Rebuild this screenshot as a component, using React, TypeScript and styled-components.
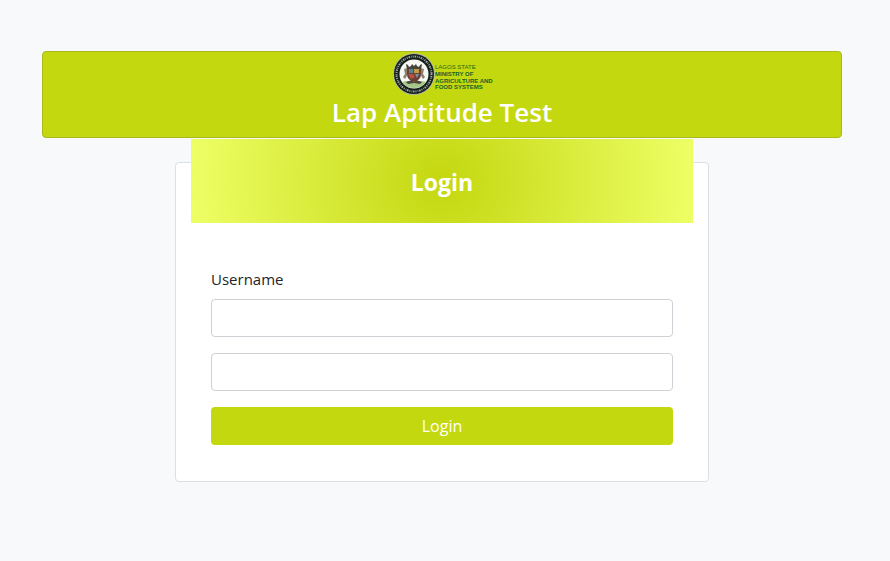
import React from "react";
import styled, { createGlobalStyle } from "styled-components";

const GlobalStyle = createGlobalStyle`
  *, *::before, *::after { box-sizing: border-box; }
  body {
    margin: 0;
    background: #f7f9fb;
    color: #212529;
    font-family: "Segoe UI", "Open Sans", "Noto Sans", sans-serif;
    font-size: 15px;
    line-height: 24px;
  }
`;

const Page = styled.main`
  display: flex;
  flex-direction: column;
  align-items: center;
  padding: 51px 48px 24px 42px;
`;

const Banner = styled.header`
  display: flex;
  flex-direction: column;
  align-items: center;
  width: 100%;
  padding-bottom: 8px;
  border: 1px solid #a9b91c;
  border-radius: 4px;
  background: #c4d80f;
`;

const Brand = styled.svg`
  display: block;
  width: 102px;
  height: 44px;
  overflow: visible;
`;

const Title = styled.h1`
  margin: 0;
  color: #fff;
  font-size: 26px;
  font-weight: 600;
  line-height: 33px;
`;

const Card = styled.section`
  width: 66.75%;
  margin-top: 24px;
  padding: 0 15px 36px;
  border: 1px solid #dcdfe3;
  border-radius: 4px;
  background: #fff;
`;

const CardHeading = styled.h2`
  margin: -24px 0 0;
  padding: 28px 20px 26px;
  background: radial-gradient(circle, #c4d70f, #eeff66);
  color: #fff;
  font-size: 23px;
  font-weight: 700;
  line-height: 30px;
  text-align: center;
`;

const Form = styled.form`
  display: flex;
  flex-direction: column;
  gap: 16px;
  padding: 44px 20px 0;
`;

const Field = styled.div`
  display: flex;
  flex-direction: column;
  gap: 8px;
`;

const TextInput = styled.input`
  width: 100%;
  height: 38px;
  padding: 6px 12px;
  border: 1px solid #cdd1d5;
  border-radius: 4px;
  background: #fff;
  color: inherit;
  font: inherit;
`;

const SubmitButton = styled.button`
  height: 38px;
  border: 0;
  border-radius: 4px;
  background: #c4d80f;
  color: #fff;
  font: inherit;
  font-size: 16px;
  cursor: pointer;
`;

function BrandMark() {
  return (
    <Brand viewBox="0 0 102 44" role="img" aria-label="Lagos State Ministry of Agriculture and Food Systems">
      <circle cx="23" cy="22" r="21" fill="#b5b9a6" />
      <circle cx="23" cy="22" r="20" fill="#15201b" />
      <circle cx="23" cy="22" r="17.5" fill="none" stroke="#a4aca4" strokeWidth="2" strokeDasharray="1 1 1.5 .8 .7 1.2" />
      <circle cx="23" cy="22" r="14.5" fill="#f7f8f3" />
      <path d="M15 12l2 1 1 2 2-1 1-2 2 2 2-2 1 2 2 1 1-2 2-1-1 6H16z" fill="#46433a" />
      <path d="M13 17l3-1 1 6-3 5-2-2 2-3zM33 17l-3-1-1 6 3 5 2-2-2-3z" fill="#8b8272" />
      <path d="M16 17h14v5q0 6-7 8-7-2-7-8z" fill="#6d4037" />
      <path d="M18 17h4v4h-4z" fill="#5b8294" />
      <path d="M23 17h5v4h-5z" fill="#c59a45" />
      <path d="M17 22h5l2 3-4 2z" fill="#b45345" />
      <path d="M24 22h4l-2 4z" fill="#7198a1" />
      <path d="M11 30q6-2 12 0 6-2 12 0-4 6-12 6-8 0-12-6z" fill="#a5c88a" />
      <path d="M15 30l6-2 2 2 2-2 6 2-2 2-6-1-6 1z" fill="#504539" />
      <g fill="#17622b" fontFamily="Liberation Sans, sans-serif" fontSize="6">
        <text x="44" y="17" fill="#286818">LAGOS STATE</text>
        <g fontWeight="700">
          <text x="44" y="24">MINISTRY OF</text>
          <text x="44" y="31">AGRICULTURE AND</text>
          <text x="44" y="37">FOOD SYSTEMS</text>
        </g>
      </g>
    </Brand>
  );
}

export default function App() {
  return (
    <>
      <GlobalStyle />
      <Page>
        <Banner>
          <BrandMark />
          <Title>Lap Aptitude Test</Title>
        </Banner>
        <Card>
          <CardHeading>Login</CardHeading>
          <Form onSubmit={(event: React.FormEvent) => event.preventDefault()}>
            <Field>
              <label htmlFor="username">Username</label>
              <TextInput id="username" name="username" type="text" autoComplete="username" />
            </Field>
            <TextInput name="password" type="password" aria-label="Password" autoComplete="current-password" />
            <SubmitButton type="submit">Login</SubmitButton>
          </Form>
        </Card>
      </Page>
    </>
  );
}
